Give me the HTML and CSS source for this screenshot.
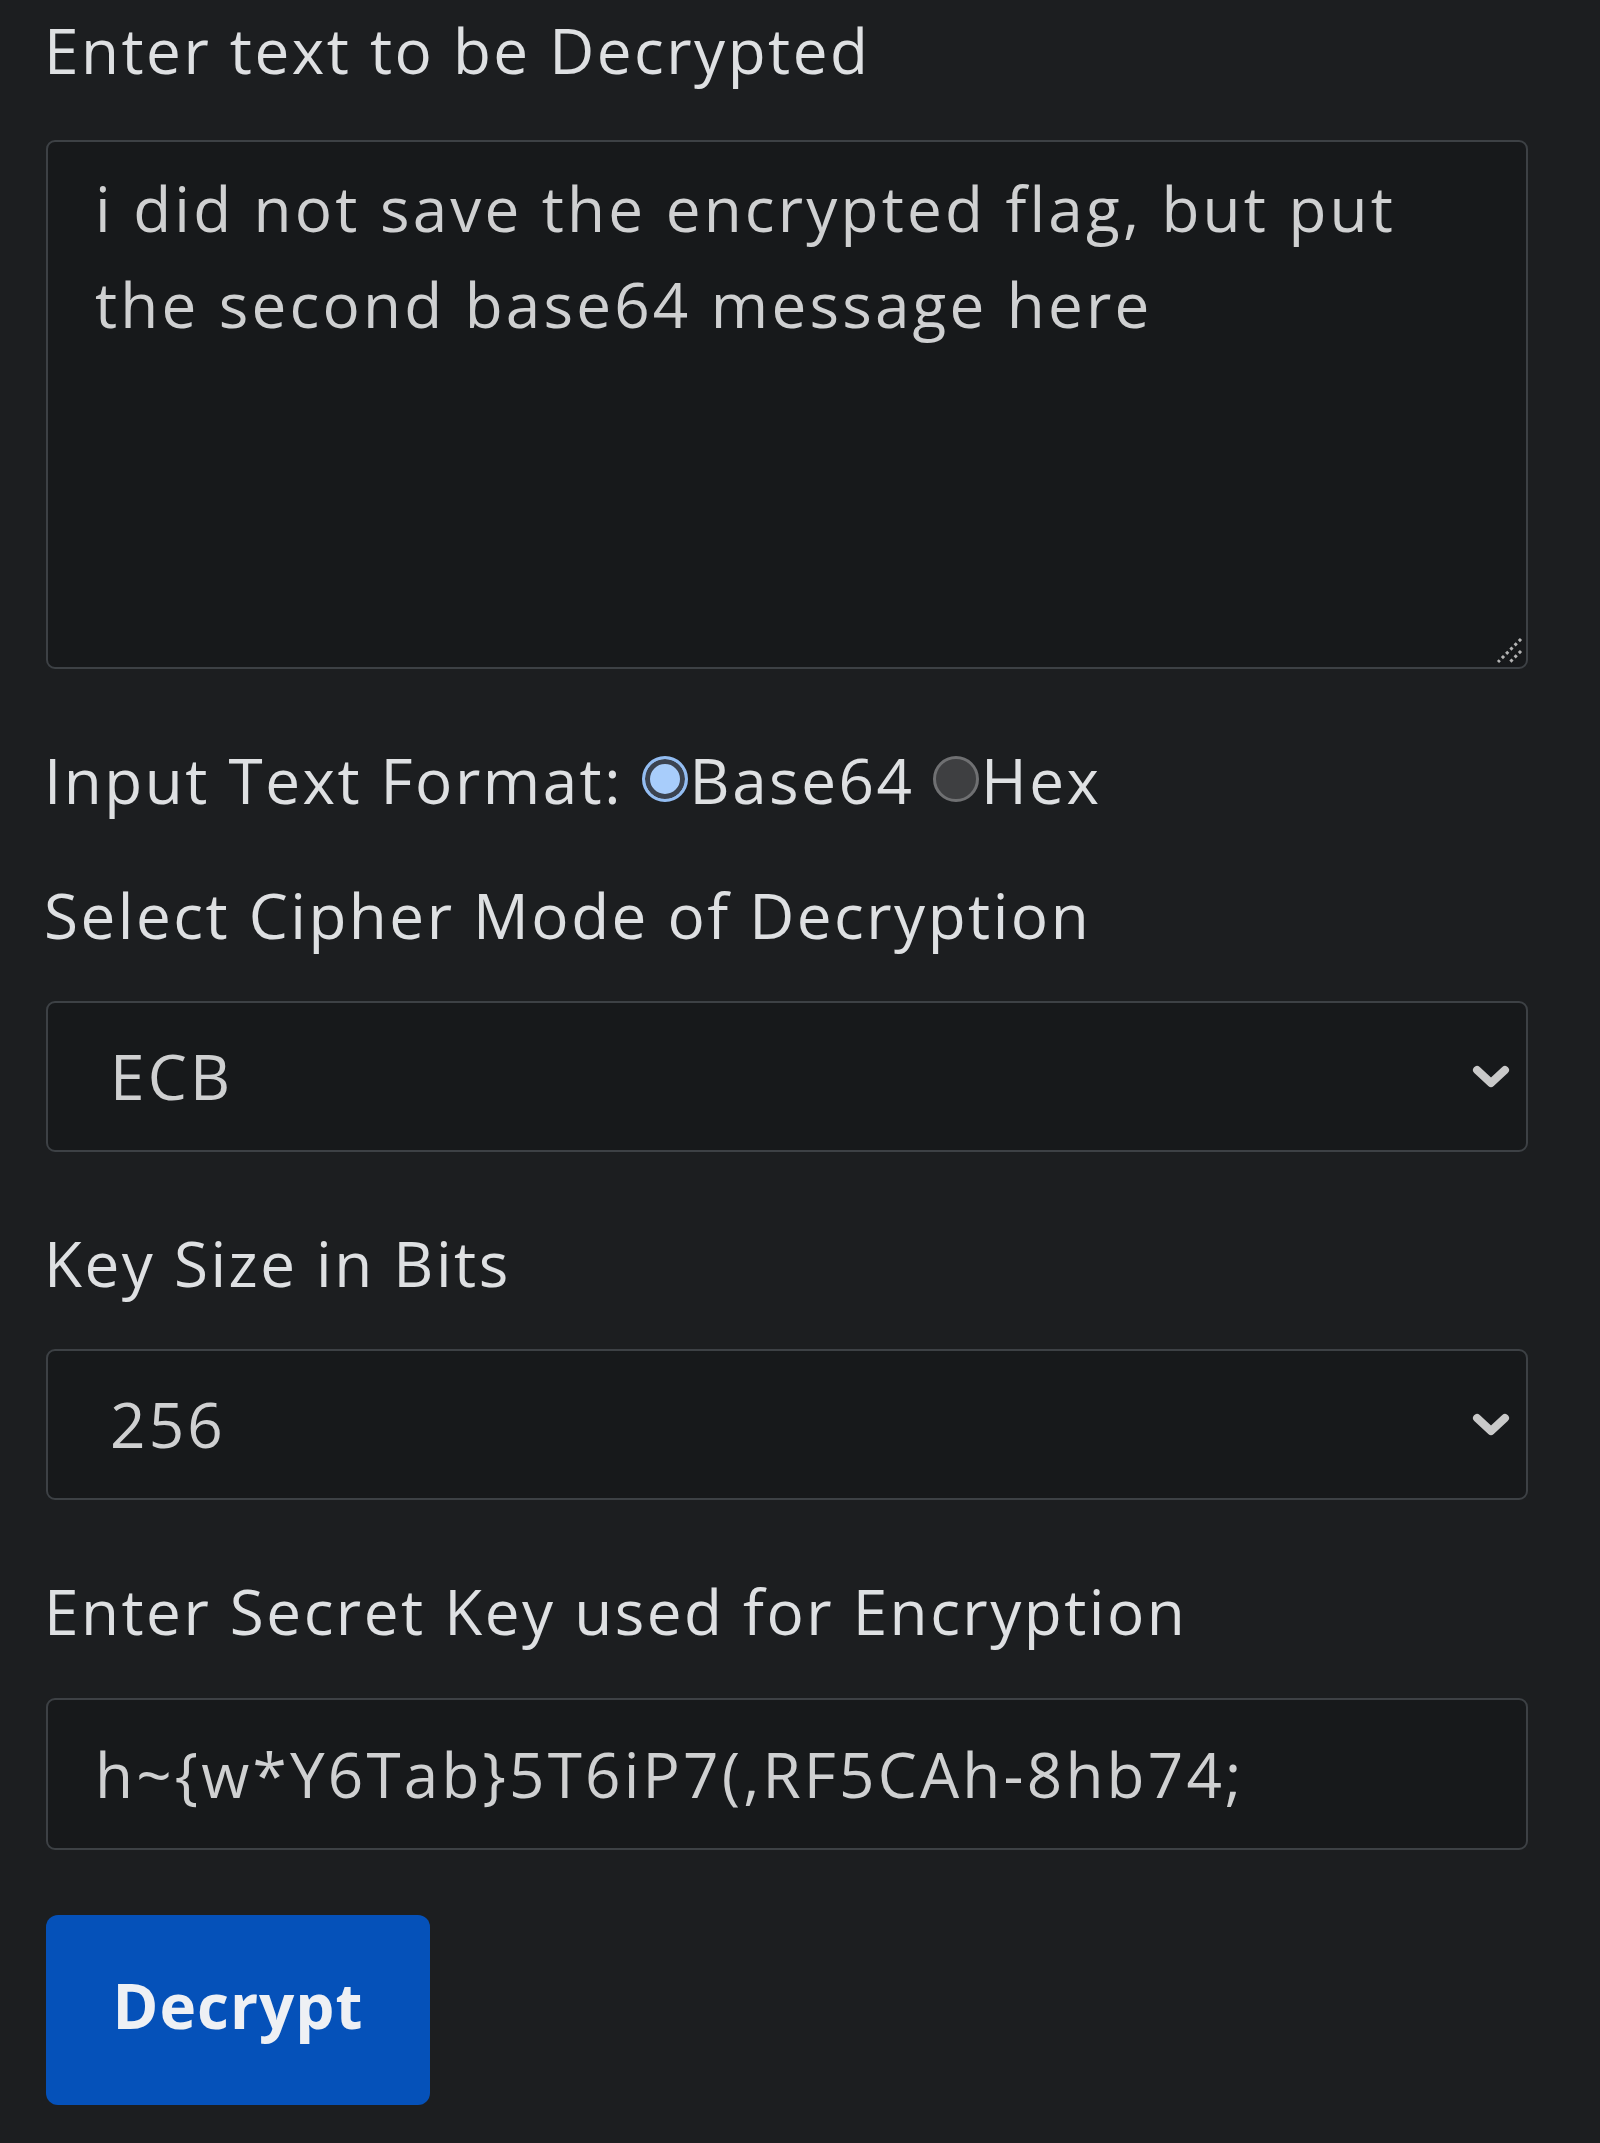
FILE: index.html
```html
<!DOCTYPE html>
<html lang="en">
<head>
<meta charset="utf-8">
<title>Decrypt</title>
<link rel="stylesheet" href="styles.css">
</head>
<body>
<form class="form">
  <label class="label" for="msg">Enter text to be Decrypted</label>
  <div class="area-wrap">
    <textarea id="msg" class="field area">i did not save the encrypted flag, but put
the second base64 message here</textarea>
    <svg class="grip" viewBox="0 0 28 28" aria-hidden="true"><path d="M26 3 L3 26 M26 15 L15 26" stroke="#b4b4b4" stroke-width="3" stroke-dasharray="3 3" fill="none"/></svg>
  </div>

  <div class="label fmt">Input Text Format: <input type="radio" class="radio" name="fmt" checked><span>Base64</span> <input type="radio" class="radio" name="fmt"><span>Hex</span></div>

  <label class="label after-fmt" for="mode">Select Cipher Mode of Decryption</label>
  <select id="mode" class="field select">
    <option>ECB</option>
  </select>

  <label class="label" for="bits">Key Size in Bits</label>
  <select id="bits" class="field select">
    <option>256</option>
  </select>

  <label class="label" for="key">Enter Secret Key used for Encryption</label>
  <input id="key" class="field input" type="text" value="h~{w*Y6Tab}5T6iP7(,RF5CAh-8hb74;">

  <button type="button" class="btn">Decrypt</button>
</form>
</body>
</html>
```

FILE: styles.css
```css
html, body {
  margin: 0;
  padding: 0;
  background: #1c1e20;
}
body {
  font-family: "Open Sans", "Noto Sans", sans-serif;
  font-size: 62px;
  line-height: 93px;
  letter-spacing: 2.5px;
  color: #dee0e2;
  height: 2143px;
  overflow: hidden;
}
.form {
  display: flex;
  flex-direction: column;
  align-items: flex-start;
  width: 1482px;
  padding: 4px 0 0 44px;
}
.label {
  display: block;
  margin-top: 65px;
}
.form > .label:first-child {
  margin-top: 0;
}
.label.after-fmt {
  margin-top: 42px;
}
.field {
  box-sizing: border-box;
  width: 1482px;
  margin: 40px 0 0 2px;
  background: #17191b;
  color: #cfd0d1;
  border: 2px solid #3d4145;
  border-radius: 9px;
  font-family: inherit;
  font-size: 62px;
  letter-spacing: 3.2px;
  outline: none;
}
.area-wrap {
  position: relative;
  margin-top: 43px;
}
.area {
  display: block;
  margin-top: 0;
  height: 529px;
  padding: 18px 47px;
  line-height: 96px;
  resize: none;
}
.grip {
  position: absolute;
  right: 5px;
  bottom: 5px;
  width: 28px;
  height: 28px;
}
.select {
  -webkit-appearance: none;
  appearance: none;
  height: 151px;
  padding: 0 80px 0 62px;
  line-height: 93px;
  margin-top: 39px;
  background-image: url("data:image/svg+xml,%3Csvg xmlns='http://www.w3.org/2000/svg' viewBox='0 0 38 24'%3E%3Cpath d='M5 5 L19 18 L33 5' fill='none' stroke='%23c9c9c9' stroke-width='8' stroke-linecap='round' stroke-linejoin='round'/%3E%3C/svg%3E");
  background-repeat: no-repeat;
  background-position: right 16px center;
  background-size: 38px 24px;
}
.input {
  height: 152px;
  padding: 0 47px;
  line-height: 93px;
}
.fmt {
  margin-top: 65px;
}
.radio {
  -webkit-appearance: none;
  appearance: none;
  box-sizing: border-box;
  width: 46px;
  height: 46px;
  margin: 0 2px 0 0;
  border-radius: 50%;
  vertical-align: 2px;
  border: 3px solid #6f7072;
  background: #3e3f41;
}
.radio:checked {
  border-color: #93bdf2;
  background: #a8cdfb;
  box-shadow: inset 0 0 0 5px #3b4350;
}
.btn {
  margin: 65px 0 0 2px;
  width: 384px;
  height: 190px;
  border: none;
  border-radius: 12px;
  background: #0551b9;
  color: #eef0f4;
  font-family: inherit;
  font-size: 62px;
  font-weight: 700;
  letter-spacing: 1px;
  padding: 0 0 10px;
}
```
